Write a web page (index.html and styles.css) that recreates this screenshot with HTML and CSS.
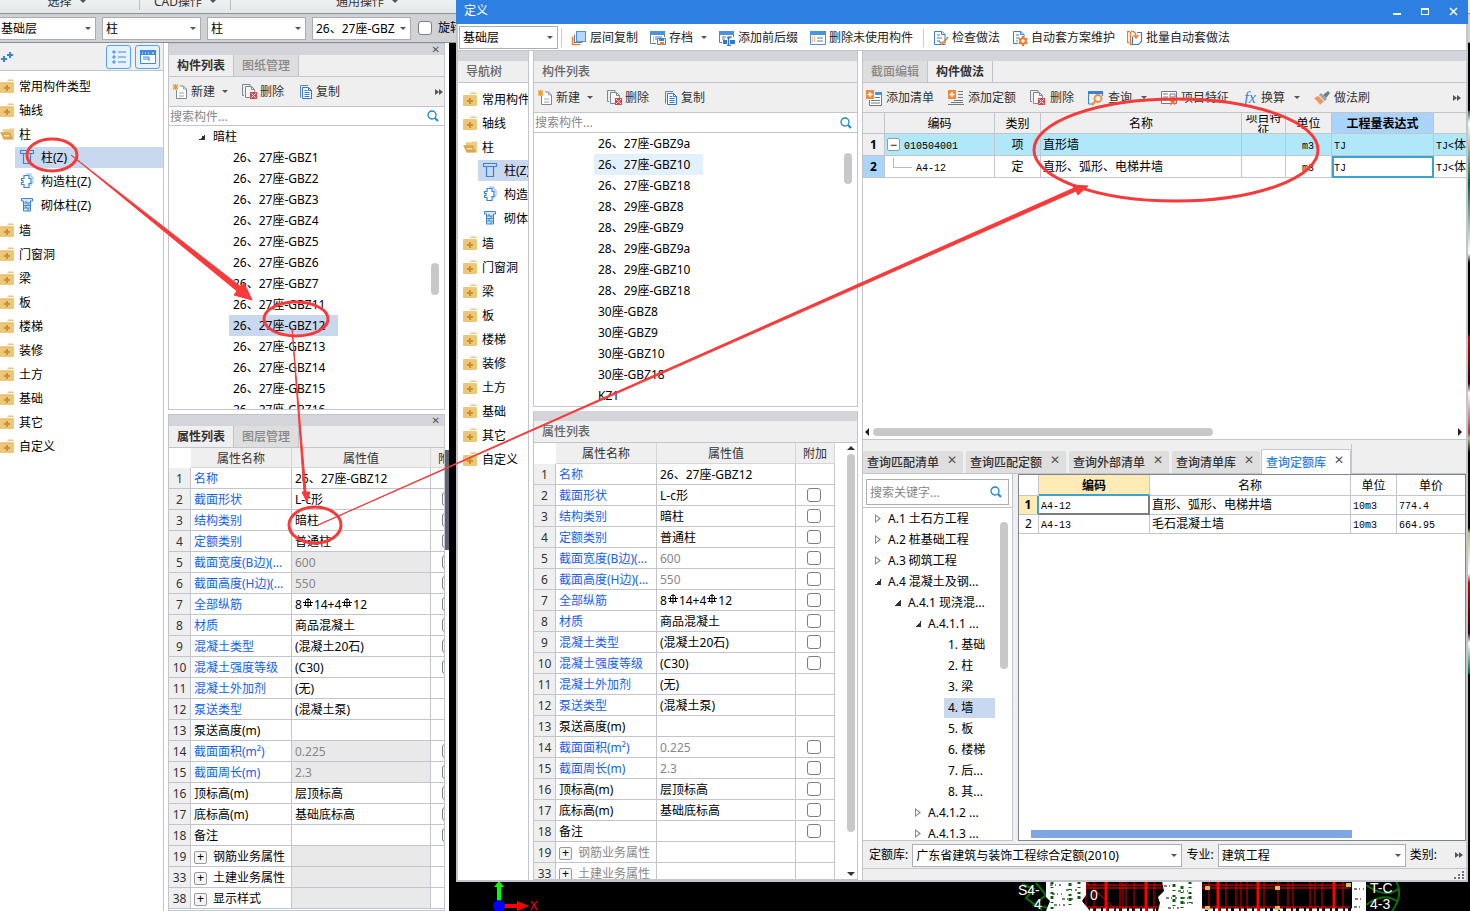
FILE: index.html
```html
<!DOCTYPE html>
<html lang="zh-CN">
<head>
<meta charset="utf-8">
<title>定义</title>
<link rel="stylesheet" href="styles.css">
</head>
<body>
<svg class="defs" aria-hidden="true">
  <symbol id="folder" viewBox="0 0 14 14"><path d="M7 2l1-1.500h5l1 1.500z" fill="#edc478"/><rect y="3" width="14" height="11" rx="1" fill="#eec679"/><path d="M7 6v6M4 9h6" stroke="#c6932f" stroke-width="2"/></symbol>
  <symbol id="open" viewBox="0 0 15 14"><path d="M3 4V2h6l1-1h5v12H4z" fill="#f0cb85"/><path d="M0 5h11l3 8H4z" fill="#d9a94c"/><path d="M4 9h6" stroke="#fff" stroke-width="1"/></symbol>
  <symbol id="col" viewBox="0 0 14 16"><path d="M.5 1.500h13v3h-3v10h-7v-10h-3zM4 4.500h6" fill="none" stroke="#3b82d4" stroke-width="1.200"/></symbol>
  <symbol id="gz" viewBox="0 0 14 16"><path d="M6 1h5v3h2v6h-2v3" fill="none" stroke="#8ab8ea"/><path d="M4 2.500h5v3h2v5H9v4H4v-3H1.500v-2H3v-2H1.500v-2H4z" fill="#fff" stroke="#3b82d4" stroke-width="1.200"/></symbol>
  <symbol id="qt" viewBox="0 0 14 16"><path d="M1.500 1.500h11v2.500h-2v10h-7V4h-2z" fill="#d7e8fb" stroke="#3b82d4"/><path d="M4 6h6M4 8.500h6M4 11h6M6 4v2M8 6v2.500M6 8.500V11M8 11v3" stroke="#3b82d4"/></symbol>
  <symbol id="new" viewBox="0 0 16 16"><path d="M3.500 6v8.500h10V5l-3-3H7" fill="#fff" stroke="#7e8894"/><path d="M10.500 2v3h3M6 9h5M6 12h5" fill="none" stroke="#9aa2ad"/><path d="M0 .500l5 5M5 .500l-5 5M2.500 0v6M0 3h5" stroke="#f29a2e" stroke-width="1.100"/></symbol>
  <symbol id="del" viewBox="0 0 16 16"><path d="M2 11.500H.500V.500H8V2" fill="none" stroke="#7e8894"/><path d="M8 13.500H3.500v-11h6l3 3V8M9.500 2.500v3h3" fill="#f6f7f8" stroke="#7e8894"/><rect x="8" y="8" width="7" height="7" fill="#d8454b"/><path d="M9 9l5 5M14 9l-5 5" stroke="#fff"/></symbol>
  <symbol id="copy" viewBox="0 0 16 16"><path d="M2.500 13.500v-12H10" fill="none" stroke="#5e83b0"/><path d="M4.500 3.500h6l3 3v8h-9z" fill="#fff" stroke="#2f7ad1"/><path d="M10.500 3.500v3h3M6.500 6.500h3M6.500 8.500h5M6.500 10.500h5M6.500 12.500h5" fill="none" stroke="#2f7ad1"/></symbol>
  <symbol id="search" viewBox="0 0 12 12"><circle cx="5" cy="5" r="4" fill="none" stroke="#1b87c4" stroke-width="1.300"/><path d="M8 8l3 3" stroke="#1b87c4" stroke-width="2"/></symbol>
  <symbol id="floors" viewBox="0 0 16 16"><path d="M1.500 6.500v8h8" fill="none" stroke="#e8853b" stroke-width="1.400"/><path d="M3.500 4.500v8h8" fill="none" stroke="#777f8b" stroke-width="1.200"/><rect x="5.500" y="1.500" width="9" height="10" fill="#b5d7fb" stroke="#4b93e2"/></symbol>
  <symbol id="archive" viewBox="0 0 16 16"><rect width="15" height="4" y="1" fill="#4b93e2"/><path d="M.500 4v9.500H6M14.500 5v2M3 7h1M5 7h7M3 9h1M5 9h2M3 11h1" fill="none" stroke="#707a87"/><path d="M7.500 8.500h8v6h-8z" fill="#fff" stroke="#3b82d4"/><path d="M9 9h5v2H9z" fill="#3b82d4"/><path d="M10 12h4v3h-4z" fill="#ec7f31"/></symbol>
  <symbol id="affix" viewBox="0 0 16 16"><rect width="15" height="4" y="1" fill="#4b93e2"/><path d="M.500 4v8.500H3M14.500 5v2M3 7h4M3 9h3M9 7h4" fill="none" stroke="#707a87"/><path d="M4 10h4v4H4zM11 10h5v4h-5z" fill="#2d78cf"/><path d="M8 7.500h4M9.500 7.500V16M8 15.500h4" stroke="#2d78cf" stroke-width="1.300"/></symbol>
  <symbol id="clean" viewBox="0 0 16 16"><path d="M.500 3.500h15v11H.500z" fill="#fff" stroke="#4b93e2"/><rect width="16" height="4" y="1" fill="#4b93e2"/><path d="M2 7h3M2 9h3M2 11h3" stroke="#ef8c3c" stroke-dasharray="1 1"/><path d="M7 8h6M7 11h6" stroke="#707a87"/></symbol>
  <symbol id="check" viewBox="0 0 16 16"><path d="M2 1.500h7l3 3v10H1.500v-13z" fill="#fff" stroke="#3b82d4"/><path d="M8.500 1.500v3h4M4 5h3M4 8h5M4 11h3" fill="none" stroke="#3b82d4"/><path d="M6 11l3 3 6-7" fill="none" stroke="#ec7b2c" stroke-width="1.600"/></symbol>
  <symbol id="gear" viewBox="0 0 16 16"><path d="M6 13.500H1.500v-12H9l3 3V7" fill="#fff" stroke="#3b82d4"/><path d="M8.500 1.500v3h3M4 5h3M4 8h3M4 11h2" fill="none" stroke="#3b82d4"/><circle cx="11" cy="11" r="2.800" fill="#fff" stroke="#ec7b2c" stroke-width="2"/><path d="M11 6v2M11 14v2M6.700 8.500l1.700 1M13.600 12.500l1.700 1M6.700 13.500l1.700-1M13.600 9.500l1.700-1" stroke="#ec7b2c" stroke-width="2"/></symbol>
  <symbol id="batch" viewBox="0 0 16 16"><path d="M2 12.500H.500v-11H3M5 14.500H3.500V2" fill="none" stroke="#ec7b2c" stroke-width="1.300"/><path d="M10 2.500h4.500v9l-3 3h-6v-8" fill="#fff" stroke="#3b82d4" stroke-width="1.200"/><path d="M4 1.500q5-.500 5 5M6.500 5L9 8l2.500-3" fill="none" stroke="#ec7b2c" stroke-width="1.300"/></symbol>
  <symbol id="addlist" viewBox="0 0 16 16"><path d="M9 2.500h6.500v13H3.500V10" fill="#fff" stroke="#707a87"/><path d="M9 2h7v3H9z" fill="#4b93e2"/><path d="M9 7.500h5M5 10.500h9M5 13h9" stroke="#707a87"/><path d="M0 0h8v9H0z" fill="#ed8a3d"/><path d="M4 2v5M1.500 4.500h5" stroke="#fff" stroke-width="1.300"/></symbol>
  <symbol id="addquota" viewBox="0 0 16 16"><path d="M10 1.500h5M10 4.500h5M10 7.500h5M6 10.500h9M0 14.500h16M3 12.500h12" stroke="#707a87"/><path d="M0 0h8v9H0z" fill="#ed8a3d"/><path d="M4 2v5M1.500 4.500h5" stroke="#fff" stroke-width="1.300"/></symbol>
  <symbol id="query" viewBox="0 0 16 16"><path d="M.500 2v12H4M14.500 3v3" fill="none" stroke="#3b82d4"/><rect width="15" height="3" y="1" fill="#3b82d4"/><circle cx="10" cy="8.500" r="3.500" fill="none" stroke="#ec8a3d" stroke-width="1.800"/><path d="M7.500 11L4 15" stroke="#ec8a3d" stroke-width="2"/></symbol>
  <symbol id="feature" viewBox="0 0 16 16"><path d="M.500 1.500h15v12H.500zM2 4h5M2 7h5M2 10h5M9 4h5v3H9z" fill="#fff" stroke="#707a87"/><path d="M12 7l1 3h3l-2.500 2 1 3.500-2.500-2-3 2 1-3.500L7 10h4z" fill="#ec7b2c"/></symbol>
  <symbol id="brush" viewBox="0 0 16 16"><path d="M14 1l2 2-4 5-3-3z" fill="#707a87"/><path d="M7 3l6 6-2 2-6-6z" fill="#9aa2ac"/><path d="M4 6l6 5-4 4-2-3-4-4z" fill="#f4955f"/></symbol>
  <symbol id="rebar" viewBox="0 0 10 10"><path d="M5 0v10M2.500 2.500v5M7.500 2.500v5M1 7.500h8" stroke="#000"/><path d="M3 1.500h4M0 4.500h10" fill="none" stroke="#000"/></symbol>
  <symbol id="more" viewBox="0 0 8 6"><path d="M0 0l4 3-4 3zM4 0l4 3-4 3z" fill="#555"/></symbol>
</svg>

<div class="desktop">
  <div class="ribbon"><span class="rib rib-a">选择<i class="car"></i></span><span class="rib rib-b">CAD操作<i class="car"></i></span><span class="rib rib-c">通用操作<i class="car"></i></span></div>
  <div class="selbar">
    <span class="combo flush"><select aria-label="楼层"><option>基础层</option></select></span>
    <span class="combo"><select aria-label="构件大类"><option>柱</option></select></span>
    <span class="combo"><select aria-label="构件类型"><option>柱</option></select></span>
    <span class="combo"><select aria-label="构件"><option>26、27座-GBZ</option></select></span>
    <label class="rotate"><input type="checkbox">旋转</label>
  </div>

  <div class="work">
    <nav class="side">
      <div class="side-head">
        <svg width="13" height="12" viewBox="0 0 13 12"><path d="M4 5v6M1 8h6M10 1v6M7 4h6" stroke="#3b82d4" stroke-width="2"/></svg>
        <button class="view" aria-label="列表视图"><svg width="14" height="14" viewBox="0 0 14 14"><path d="M1 1h2v2H1zM1 6h2v2H1zM1 11h2v2H1zM6 2h8M6 7h8M6 12h8" fill="none" stroke="#3b8ae8"/></svg></button>
        <button class="view" aria-label="图标视图"><svg width="16" height="14" viewBox="0 0 16 14"><path d="M.500.500h15v13H.500zM3 7h6v4M3 9h6" fill="#fff" stroke="#3b8ae8"/><path d="M0 0h16v5H0z" fill="#3b8ae8"/><path d="M2 3h1M5 3h1M8 3h1M12 3h2" stroke="#fff"/></svg></button>
      </div>
      <ul class="tree">
        <li><svg><use href="#folder"/></svg>常用构件类型</li>
        <li><svg><use href="#folder"/></svg>轴线</li>
        <li><svg><use href="#open"/></svg>柱</li>
        <li class="sub on"><svg><use href="#col"/></svg>柱(Z)</li>
        <li class="sub"><svg><use href="#gz"/></svg>构造柱(Z)</li>
        <li class="sub"><svg><use href="#qt"/></svg>砌体柱(Z)</li>
        <li><svg><use href="#folder"/></svg>墙</li>
        <li><svg><use href="#folder"/></svg>门窗洞</li>
        <li><svg><use href="#folder"/></svg>梁</li>
        <li><svg><use href="#folder"/></svg>板</li>
        <li><svg><use href="#folder"/></svg>楼梯</li>
        <li><svg><use href="#folder"/></svg>装修</li>
        <li><svg><use href="#folder"/></svg>土方</li>
        <li><svg><use href="#folder"/></svg>基础</li>
        <li><svg><use href="#folder"/></svg>其它</li>
        <li><svg><use href="#folder"/></svg>自定义</li>
      </ul>
    </nav>

    <div class="docks">
      <section class="dock">
        <div class="strip"><button class="x" aria-label="关闭">✕</button></div>
        <div class="tabs"><button class="tab on">构件列表</button><button class="tab off">图纸管理</button></div>
        <div class="tools list-tools">
          <button><svg><use href="#new"/></svg>新建<i class="car"></i></button>
          <button><svg><use href="#del"/></svg>删除</button>
          <button><svg><use href="#copy"/></svg>复制</button>
          <svg class="more"><use href="#more"/></svg>
        </div>
        <div class="search"><input type="text" placeholder="搜索构件..." aria-label="搜索构件"><svg><use href="#search"/></svg></div>
        <div class="list">
          <ul>
            <li class="group"><i class="tri"></i>暗柱</li>
            <li><span>26、27座-GBZ1</span></li><li><span>26、27座-GBZ2</span></li><li><span>26、27座-GBZ3</span></li>
            <li><span>26、27座-GBZ4</span></li><li><span>26、27座-GBZ5</span></li><li><span>26、27座-GBZ6</span></li>
            <li><span>26、27座-GBZ7</span></li><li><span>26、27座-GBZ11</span></li><li><span class="on">26、27座-GBZ12</span></li>
            <li><span>26、27座-GBZ13</span></li><li><span>26、27座-GBZ14</span></li><li><span>26、27座-GBZ15</span></li>
            <li><span>26、27座-GBZ16</span></li>
          </ul>
          <div class="thumb thumb-a"></div>
        </div>
      </section>
      <section class="dock">
        <div class="strip"><button class="x" aria-label="关闭">✕</button></div>
        <div class="tabs"><button class="tab on">属性列表</button><button class="tab off">图层管理</button></div>
        <div class="clip">
        <table class="props main-props">
          <thead><tr><th class="n"></th><th class="k">属性名称</th><th class="v">属性值</th><th class="c">附加</th></tr></thead>
          <tbody>
            <tr><td>1</td><td class="b">名称</td><td>26、27座-GBZ12</td><td></td></tr>
            <tr><td>2</td><td class="b">截面形状</td><td>L-c形</td><td><input type="checkbox" aria-label="附加 截面形状"></td></tr>
            <tr><td>3</td><td class="b">结构类别</td><td>暗柱</td><td><input type="checkbox" aria-label="附加 结构类别"></td></tr>
            <tr><td>4</td><td class="b">定额类别</td><td>普通柱</td><td><input type="checkbox" aria-label="附加 定额类别"></td></tr>
            <tr><td>5</td><td class="b">截面宽度(B边)(...</td><td class="g">600</td><td><input type="checkbox" aria-label="附加 截面宽度"></td></tr>
            <tr><td>6</td><td class="b">截面高度(H边)(...</td><td class="g">550</td><td><input type="checkbox" aria-label="附加 截面高度"></td></tr>
            <tr><td>7</td><td class="b">全部纵筋</td><td>8<svg class="rebar"><use href="#rebar"/></svg>14+4<svg class="rebar"><use href="#rebar"/></svg>12</td><td><input type="checkbox" aria-label="附加 全部纵筋"></td></tr>
            <tr><td>8</td><td class="b">材质</td><td>商品混凝土</td><td><input type="checkbox" aria-label="附加 材质"></td></tr>
            <tr><td>9</td><td class="b">混凝土类型</td><td>(混凝土20石)</td><td><input type="checkbox" aria-label="附加 混凝土类型"></td></tr>
            <tr><td>10</td><td class="b">混凝土强度等级</td><td>(C30)</td><td><input type="checkbox" aria-label="附加 混凝土强度等级"></td></tr>
            <tr><td>11</td><td class="b">混凝土外加剂</td><td>(无)</td><td></td></tr>
            <tr><td>12</td><td class="b">泵送类型</td><td>(混凝土泵)</td><td></td></tr>
            <tr><td>13</td><td>泵送高度(m)</td><td></td><td></td></tr>
            <tr><td>14</td><td class="b">截面面积(m²)</td><td class="g">0.225</td><td><input type="checkbox" aria-label="附加 截面面积"></td></tr>
            <tr><td>15</td><td class="b">截面周长(m)</td><td class="g">2.3</td><td><input type="checkbox" aria-label="附加 截面周长"></td></tr>
            <tr><td>16</td><td>顶标高(m)</td><td>层顶标高</td><td><input type="checkbox" aria-label="附加 顶标高"></td></tr>
            <tr><td>17</td><td>底标高(m)</td><td>基础底标高</td><td><input type="checkbox" aria-label="附加 底标高"></td></tr>
            <tr><td>18</td><td>备注</td><td></td><td><input type="checkbox" aria-label="附加 备注"></td></tr>
            <tr><td>19</td><td><button class="pm" aria-label="展开">+</button>钢筋业务属性</td><td class="g"></td><td></td></tr>
            <tr><td>33</td><td><button class="pm" aria-label="展开">+</button>土建业务属性</td><td class="g"></td><td></td></tr>
            <tr><td>38</td><td><button class="pm" aria-label="展开">+</button>显示样式</td><td class="g"></td><td></td></tr>
          </tbody>
        </table>
        </div>
      </section>
    </div>
    <div class="gutter"><button class="collapse" aria-label="收起"></button></div>
    <div class="canvas"></div>
  </div>

  <svg class="axis" width="60" height="30" viewBox="0 0 60 30"><path d="M15 2v22" stroke="#0f0" stroke-width="4"/><path d="M15 0l5 6H10z" fill="#0f0"/><path d="M15 25h20" stroke="#f00" stroke-width="4"/><path d="M33 20l12 5-12 5z" fill="#f00"/><circle cx="15" cy="25" r="6" fill="#00f"/><text x="46" y="29" fill="#f00" font-size="13">X</text></svg>
  <svg class="plan" width="400" height="30" viewBox="0 0 400 30">
    <g fill="none">
      <path d="M66 4H340M66 7H340M66 26H340" stroke="#f00"/>
      <path d="M96 0v30M136 0v30M208 0v30M248 0v30M324 0v30" stroke="#f00" stroke-width="3"/>
      <path d="M76 0v30M84 0v30M110 0v30M113 0v30M116 0v30M124 0v30M144 0v30M199 0v30M216 0v30M226 0v30M231 0v30M237 0v30M254 0v30M268 0v30M278 0v30M283 0v30M300 0v30M305 0v30M312 0v30M333 0v30M75 0l32 30" stroke="#d00"/>
      <path d="M12 3l12 5-8 9 16 12M26 2l10 12-12 10 20 4M356 4q20 14 32 4M356 24q18-14 32-3M386 0q8 14-4 30" stroke="#0a700a" stroke-width="2"/>
    </g>
    <path d="M36 0h40v14l-4 6 8 10H36l4-10-4-4zM152 0h40v30h-44l2-8-2-6 6-6zM342 0h14v30h-14z" fill="#fff"/>
    <path d="M40 4h12M56 9h14M42 13h10M52 18h16M44 24h14M154 5h12M168 10h10M156 17h22M172 22h12M158 27h16M344 8h10M345 18h9M344 26h8" stroke="#000" stroke-dasharray="3 2 1 3 2 5"/>
    <path d="M42 0v28M60 2v24M69 0v20M164 3v24M172 5v22M180 0v26" stroke="#0a600a" stroke-width="3" stroke-dasharray="3 3 1 4 2 2"/>
    <path d="M80 29h66M192 29h150" stroke="#fff" stroke-width="3" stroke-dasharray="3 3 5 2"/>
    <path d="M195 5h5v4h-5zM265 5h5v4h-5zM336 2h5v4h-5zM195 25h5v4h-5zM265 25h5v4h-5z" fill="#cfc060"/>
    <g fill="#fff" font-size="14"><text x="8" y="14">S4-</text><text x="24" y="28">4</text><text x="80" y="19">0</text><text x="360" y="12">T-C</text><text x="360" y="28">4-3</text></g>
  </svg>
  <div class="edge"></div>

  <main class="dialog">
    <header class="title"><h1>定义</h1><div class="wc"><button aria-label="最小化"><i class="min"></i></button><button aria-label="最大化"><i class="max"></i></button><button aria-label="关闭"><svg width="9" height="9" viewBox="0 0 9 9"><path d="M1 1l7 7M8 1L1 8" stroke="#fff" stroke-width="1.500"/></svg></button></div></header>
    <div class="frame">
    <div class="bar">
      <span class="combo"><select aria-label="楼层"><option>基础层</option></select></span><i class="sep"></i>
      <button><svg><use href="#floors"/></svg>层间复制</button>
      <button><svg><use href="#archive"/></svg>存档<i class="car"></i></button>
      <button><svg><use href="#affix"/></svg>添加前后缀</button>
      <button><svg><use href="#clean"/></svg>删除未使用构件</button><i class="sep"></i>
      <button><svg><use href="#check"/></svg>检查做法</button>
      <button><svg><use href="#gear"/></svg>自动套方案维护</button>
      <button><svg><use href="#batch"/></svg>批量自动套做法</button>
    </div>
    <div class="cols">
      <nav class="col nav2">
        <div class="strip"></div><h2>导航树</h2>
        <ul class="tree">
          <li><svg><use href="#folder"/></svg>常用构件类型</li>
          <li><svg><use href="#folder"/></svg>轴线</li>
          <li><svg><use href="#open"/></svg>柱</li>
          <li class="sub on"><svg><use href="#col"/></svg>柱(Z)</li>
          <li class="sub"><svg><use href="#gz"/></svg>构造柱(Z)</li>
          <li class="sub"><svg><use href="#qt"/></svg>砌体柱(Z)</li>
          <li><svg><use href="#folder"/></svg>墙</li>
          <li><svg><use href="#folder"/></svg>门窗洞</li>
          <li><svg><use href="#folder"/></svg>梁</li>
          <li><svg><use href="#folder"/></svg>板</li>
          <li><svg><use href="#folder"/></svg>楼梯</li>
          <li><svg><use href="#folder"/></svg>装修</li>
          <li><svg><use href="#folder"/></svg>土方</li>
          <li><svg><use href="#folder"/></svg>基础</li>
          <li><svg><use href="#folder"/></svg>其它</li>
          <li><svg><use href="#folder"/></svg>自定义</li>
        </ul>
      </nav>

      <div class="mid">
        <section class="col">
          <div class="strip"></div><h2>构件列表</h2>
          <div class="tools list-tools">
            <button><svg><use href="#new"/></svg>新建<i class="car"></i></button>
            <button><svg><use href="#del"/></svg>删除</button>
            <button><svg><use href="#copy"/></svg>复制</button>
          </div>
          <div class="search"><input type="text" placeholder="搜索构件..." aria-label="搜索构件"><svg><use href="#search"/></svg></div>
          <div class="list">
            <ul>
              <li><span>26、27座-GBZ9a</span></li><li><span class="hover">26、27座-GBZ10</span></li><li><span>26、27座-GBZ18</span></li>
              <li><span>28、29座-GBZ8</span></li><li><span>28、29座-GBZ9</span></li><li><span>28、29座-GBZ9a</span></li>
              <li><span>28、29座-GBZ10</span></li><li><span>28、29座-GBZ18</span></li><li><span>30座-GBZ8</span></li>
              <li><span>30座-GBZ9</span></li><li><span>30座-GBZ10</span></li><li><span>30座-GBZ18</span></li><li><span>KZ1</span></li>
            </ul>
            <div class="thumb thumb-b"></div>
          </div>
        </section>
        <section class="col">
          <div class="strip"></div><h2>属性列表</h2>
          <div class="clip">
          <table class="props">
            <thead><tr><th class="n"></th><th class="k">属性名称</th><th class="v">属性值</th><th class="c">附加</th></tr></thead>
            <tbody>
              <tr><td>1</td><td class="b">名称</td><td>26、27座-GBZ12</td><td></td></tr>
              <tr><td>2</td><td class="b">截面形状</td><td>L-c形</td><td><input type="checkbox" aria-label="附加 截面形状"></td></tr>
              <tr><td>3</td><td class="b">结构类别</td><td>暗柱</td><td><input type="checkbox" aria-label="附加 结构类别"></td></tr>
              <tr><td>4</td><td class="b">定额类别</td><td>普通柱</td><td><input type="checkbox" aria-label="附加 定额类别"></td></tr>
              <tr><td>5</td><td class="b">截面宽度(B边)(...</td><td class="w">600</td><td><input type="checkbox" aria-label="附加 截面宽度"></td></tr>
              <tr><td>6</td><td class="b">截面高度(H边)(...</td><td class="w">550</td><td><input type="checkbox" aria-label="附加 截面高度"></td></tr>
              <tr><td>7</td><td class="b">全部纵筋</td><td>8<svg class="rebar"><use href="#rebar"/></svg>14+4<svg class="rebar"><use href="#rebar"/></svg>12</td><td><input type="checkbox" aria-label="附加 全部纵筋"></td></tr>
              <tr><td>8</td><td class="b">材质</td><td>商品混凝土</td><td><input type="checkbox" aria-label="附加 材质"></td></tr>
              <tr><td>9</td><td class="b">混凝土类型</td><td>(混凝土20石)</td><td><input type="checkbox" aria-label="附加 混凝土类型"></td></tr>
              <tr><td>10</td><td class="b">混凝土强度等级</td><td>(C30)</td><td><input type="checkbox" aria-label="附加 混凝土强度等级"></td></tr>
              <tr><td>11</td><td class="b">混凝土外加剂</td><td>(无)</td><td></td></tr>
              <tr><td>12</td><td class="b">泵送类型</td><td>(混凝土泵)</td><td></td></tr>
              <tr><td>13</td><td>泵送高度(m)</td><td></td><td></td></tr>
              <tr><td>14</td><td class="b">截面面积(m²)</td><td class="w">0.225</td><td><input type="checkbox" aria-label="附加 截面面积"></td></tr>
              <tr><td>15</td><td class="b">截面周长(m)</td><td class="w">2.3</td><td><input type="checkbox" aria-label="附加 截面周长"></td></tr>
              <tr><td>16</td><td>顶标高(m)</td><td>层顶标高</td><td><input type="checkbox" aria-label="附加 顶标高"></td></tr>
              <tr><td>17</td><td>底标高(m)</td><td>基础底标高</td><td><input type="checkbox" aria-label="附加 底标高"></td></tr>
              <tr><td>18</td><td>备注</td><td></td><td><input type="checkbox" aria-label="附加 备注"></td></tr>
              <tr><td>19</td><td class="w"><button class="pm" aria-label="展开">+</button>钢筋业务属性</td><td></td><td></td></tr>
              <tr><td>33</td><td class="w"><button class="pm" aria-label="展开">+</button>土建业务属性</td><td></td><td></td></tr>
            </tbody>
          </table>
          <div class="vbar"><i class="up"></i><i class="vthumb"></i><i class="down"></i></div>
          </div>
        </section>
      </div>

      <div class="right">
        <section class="col methods">
          <div class="strip"></div>
          <div class="tabs"><button class="tab off">截面编辑</button><button class="tab on">构件做法</button></div>
          <div class="tools">
            <button><svg><use href="#addlist"/></svg>添加清单</button>
            <button><svg><use href="#addquota"/></svg>添加定额</button>
            <button><svg><use href="#del"/></svg>删除</button>
            <button><svg><use href="#query"/></svg>查询<i class="car"></i></button>
            <button><svg><use href="#feature"/></svg>项目特征</button>
            <button><em>fx</em>换算<i class="car"></i></button>
            <button><svg><use href="#brush"/></svg>做法刷</button>
            <svg class="more"><use href="#more"/></svg>
          </div>
          <div class="sheet">
          <table class="grid">
            <colgroup><col class="w22"><col class="w110"><col class="w46"><col class="w201"><col class="w44"><col class="w46"><col class="w102"><col></colgroup>
            <thead><tr><th></th><th>编码</th><th>类别</th><th>名称</th><th><div class="wrap">项目特征</div></th><th>单位</th><th class="act">工程量表达式</th><th></th></tr></thead>
            <tbody>
              <tr class="cyan"><td class="rn">1</td><td class="root"><button class="pm" aria-label="收起">−</button><code>010504001</code></td><td class="mid-t">项</td><td>直形墙</td><td></td><td class="end"><code>m3</code></td><td><code>TJ</code></td><td><code>TJ&lt;</code>体积&gt;</td></tr>
              <tr><td class="rn act">2</td><td class="leaf"><code>A4-12</code></td><td class="mid-t">定</td><td>直形、弧形、电梯井墙</td><td></td><td class="end"><code>m3</code></td><td class="focus"><code>TJ</code></td><td><code>TJ&lt;</code>体积&gt;</td></tr>
            </tbody>
          </table>
          </div>
          <div class="hbar"><i class="lt"></i><i class="hthumb"></i><i class="rt"></i></div>
        </section>

        <section class="query">
          <div class="qtabs">
            <button class="qtab">查询匹配清单<b>✕</b></button><button class="qtab">查询匹配定额<b>✕</b></button><button class="qtab">查询外部清单<b>✕</b></button><button class="qtab">查询清单库<b>✕</b></button><button class="qtab on">查询定额库<b>✕</b></button><i class="vline"></i>
          </div>
          <div class="qbody">
            <div class="qtree">
              <div class="qsearch"><input type="text" placeholder="搜索关键字..." aria-label="搜索关键字"><svg><use href="#search"/></svg></div>
              <div class="qlist">
              <ul>
                <li><i class="tc"></i>A.1 土石方工程</li><li><i class="tc"></i>A.2 桩基础工程</li><li><i class="tc"></i>A.3 砌筑工程</li>
                <li><i class="tri"></i>A.4 混凝土及钢...</li><li class="l1"><i class="tri"></i>A.4.1 现浇混...</li><li class="l2"><i class="tri"></i>A.4.1.1 ...</li>
                <li class="l3"><span>1. 基础</span></li><li class="l3"><span>2. 柱</span></li><li class="l3"><span>3. 梁</span></li><li class="l3"><span class="on">4. 墙</span></li>
                <li class="l3"><span>5. 板</span></li><li class="l3"><span>6. 楼梯</span></li><li class="l3"><span>7. 后...</span></li><li class="l3"><span>8. 其...</span></li>
                <li class="l2"><i class="tc"></i>A.4.1.2 ...</li><li class="l2"><i class="tc"></i>A.4.1.3 ...</li>
              </ul>
              <div class="thumb thumb-c"></div>
              </div>
            </div>
            <div class="qgrid">
              <table class="grid quota">
                <colgroup><col class="w20"><col class="w111"><col class="w201"><col class="w46"><col></colgroup>
                <thead><tr><th></th><th class="yel">编码</th><th>名称</th><th>单位</th><th>单价</th></tr></thead>
                <tbody>
                  <tr><td class="rn yel">1</td><td class="cur"><code>A4-12</code></td><td>直形、弧形、电梯井墙</td><td><code>10m3</code></td><td><code>774.4</code></td></tr>
                  <tr><td class="rn2">2</td><td><code>A4-13</code></td><td>毛石混凝土墙</td><td><code>10m3</code></td><td><code>664.95</code></td></tr>
                </tbody>
              </table>
              <div class="bluebar"></div>
            </div>
          </div>
          <div class="qfoot">
            <label for="lib">定额库:</label><span class="combo wide"><select id="lib"><option>广东省建筑与装饰工程综合定额(2010)</option></select></span>
            <label for="major">专业:</label><span class="combo mid-w"><select id="major"><option>建筑工程</option></select></span>
            <span>类别:</span><svg class="more"><use href="#more"/></svg>
          </div>
          <div class="status"><svg width="10" height="8" viewBox="0 0 10 8"><path d="M8 1h2M4 4h2M8 4h2M0 7h2M4 7h2M8 7h2" stroke="#6b7480" stroke-width="2"/></svg></div>
        </section>
      </div>
    </div>
    </div>
  </main>

  <svg class="marks" width="1470" height="911" viewBox="0 0 1470 911">
    <g fill="none" stroke="#f93a3a"><ellipse cx="52" cy="155" rx="25" ry="16" stroke-width="3"/><ellipse cx="296" cy="319" rx="32" ry="17" stroke-width="3"/><ellipse cx="315" cy="525" rx="26" ry="18" stroke-width="3"/><ellipse cx="1176" cy="150" rx="142" ry="51" stroke-width="3"/></g>
    <g fill="#f93a3a" stroke="#f93a3a" stroke-linejoin="round"><path d="M71 155L241 287l3-4 8 17-18-5 3-4z"/><path d="M292 328l14 164 4 0-3 10-5-10 2 0z"/><path d="M318 525L1074 188l-2-3 16 1-10 9-2-4z"/></g>
  </svg>
</div>
</body>
</html>
```
FILE: styles.css
```css
* { box-sizing: border-box; }
body { margin: 0; font: 12px/20px "Noto Sans", "Noto Sans CJK SC", sans-serif; color: #000; background: #000; }
ul { list-style: none; margin: 0; padding: 0; }
button, select, input { font: inherit; color: inherit; margin: 0; }
button { background: none; border: 0; padding: 0; white-space: nowrap; }
input[type=checkbox] { appearance: none; flex: none; width: 14px; height: 14px; border: 1px solid #7c7f85; border-radius: 3px; background: #fff; }
h1, h2 { margin: 0; font-size: 12px; font-weight: 400; }
.defs { display: none; }
.desktop { position: relative; display: flex; flex-direction: column; height: 100vh; overflow: hidden; }

.ribbon { position: relative; display: flex; height: 14px; flex: none; overflow: hidden; background: linear-gradient(#eef1f1, #e4e8e9); border-bottom: 1px solid #8c8f96; color: #333; line-height: 4px; }
.rib { display: flex; align-items: flex-start; justify-content: center; height: 10px; white-space: nowrap; }
.rib-a { width: 140px; padding-right: 6px; border-right: 1px solid #b8bbc0; }
.rib-b { width: 91px; border-right: 1px solid #b8bbc0; }
.rib-c { width: 272px; }
.rib .car { margin-left: 8px; }
.car { flex: none; width: 0; height: 0; border: 3px solid transparent; border-top-color: #555; border-bottom: 0; }
.selbar { display: flex; align-items: center; gap: 6px; height: 29px; flex: none; background: #d0d2d6; border-bottom: 1px solid #8c8f96; }
.combo { position: relative; flex: none; width: 99px; height: 23px; background: #fff; border: 1px solid #abadb3; }
.combo.flush { width: 96px; border-left: 0; }
.combo.flush select { padding-left: 1px; }
.combo select { appearance: none; width: 100%; height: 100%; border: 0; background: none; padding: 1px 12px 0 3px; }
.combo::after { content: ""; position: absolute; right: 4px; top: 9px; border: 3px solid transparent; border-top-color: #555; border-bottom: 0; }
.rotate { display: flex; align-items: center; gap: 6px; padding-left: 1px; }

.work { flex: 1; min-height: 0; display: flex; }
.side { width: 164px; flex: none; background: #fff; border-right: 1px solid #c3c5cd; }
.side-head { display: flex; align-items: center; gap: 4px; height: 28px; padding-right: 3px; background: #efefef; border-bottom: 1px solid #c3c5cd; }
.side-head > svg { margin-right: auto; }
.view { width: 25px; height: 24px; border: 1px solid #58a0ee; border-radius: 3px; background: #e6f2ff; display: grid; place-items: center; }
.tree { display: flex; flex-direction: column; padding-top: 3px; }
.tree li { display: flex; align-items: center; gap: 5px; flex: none; height: 24px; padding-top: 1px; white-space: nowrap; }
.tree svg { width: 14px; height: 14px; flex: none; margin-bottom: 2px; }
.tree .sub { height: 21px; margin: 1px 0 2px 15px; padding-left: 5px; gap: 7px; }
.tree .sub svg { height: 16px; }
.tree .on { background: #c8d8ef; }

.docks { width: 281px; flex: none; padding-left: 4px; background: #fff; display: grid; grid-template-rows: minmax(0, 367fr) minmax(0, 497fr); gap: 4px; }
.dock { display: flex; flex-direction: column; min-height: 0; border: 1px solid #c3c5cd; overflow: hidden; }
.strip { display: flex; justify-content: flex-end; flex: none; height: 11px; background: #d4d5da; }
.x { font: 10px/12px "DejaVu Sans", sans-serif; color: #555; padding-right: 4px; }
.tabs { display: flex; flex: none; height: 22px; background: #efefef; border-bottom: 1px solid #c3c5cd; }
.tab { padding: 0 8px; border-right: 1px solid #c3c5cd; color: #333; }
.tab.on { font-weight: 700; }
.tab.off { background: #dedede; color: #888; font-weight: 500; }
.tools { display: flex; align-items: center; gap: 14px; flex: none; height: 30px; padding: 0 5px 0 3px; background: #efefef; border-bottom: 1px solid #c3c5cd; color: #333; }
.tools button, .bar button { display: flex; align-items: center; gap: 4px; }
.tools button svg { width: 16px; height: 16px; }
.tools .car, .bar .car { margin: 0 0 0 5px; }
.tools em { width: 14px; font: italic 16px/16px "Liberation Serif", serif; color: #3b82d4; }
.list-tools { padding-left: 4px; }
.list-tools button { gap: 2px; }
svg.more { width: 8px; height: 6px; margin-left: auto; flex: none; }
.list-tools svg.more { margin-right: -4px; }
.search { display: flex; align-items: center; flex: none; height: 19px; padding: 0 5px 0 1px; border-bottom: 1px solid #c3c5cd; background: #fff; }
.search input, .qsearch input { flex: 1; min-width: 0; height: 18px; border: 0; padding: 1px 0 0; background: none; }
input::placeholder { color: #888; opacity: 1; }
.search svg, .qsearch svg { width: 12px; height: 12px; flex: none; }
.list { position: relative; flex: 1; min-height: 0; overflow: hidden; background: #fff; }
.list li { height: 21px; line-height: 21px; padding-left: 60px; white-space: nowrap; }
.list li span { display: inline-block; min-width: 90px; padding: 0 13px 0 4px; }
.list li.group { display: flex; align-items: center; padding-left: 30px; gap: 8px; }
.list .on { background: #c8d8ef; }
.list .hover { background: #e3f1ff; }
.tri { flex: none; width: 6px; height: 6px; background: linear-gradient(135deg, transparent 50%, #333 50%); }
.thumb { position: absolute; right: 5px; width: 8px; border-radius: 4px; background: #c8c8c8; }
.thumb-a { top: 137px; height: 32px; }
.thumb-b { top: 20px; height: 31px; }
.thumb-c { top: 14px; height: 147px; right: 4px; }

.clip { position: relative; flex: 1; min-height: 0; overflow: hidden; background: #fff; }
table { border-collapse: separate; border-spacing: 0; table-layout: fixed; }
.props { width: 301px; }
.props th, .props td { height: 21px; padding: 2px 0 0 3px; line-height: 18px; border: solid #c3c5cd; border-width: 0 1px 1px 0; white-space: nowrap; overflow: hidden; text-align: left; }
.props th { background: #efefef; color: #333; font-weight: 400; text-align: center; border-color: #d5d6da; padding-left: 0; }
.main-props th { height: 20px; line-height: 17px; }
.props .n { width: 22px; background: #fff; border-color: #fff; }
.props .k { width: 101px; }
.props .v { width: 139px; }
.props .c { width: 39px; }
.props td:first-child { background: #efefef; text-align: center; padding-left: 0; color: #333; }
.props td:last-child { padding: 0; text-align: center; }
.props td input { display: block; margin: 0 11px; }
.props .b { color: #1560f0; }
.props .g { background: #e9e9e9; color: #888; }
.props .w { color: #888; }
.rebar { width: 10px; height: 10px; margin: 0 1px; vertical-align: 1px; }
.pm { width: 13px; height: 13px; margin: 0 6px 0 0; border: 1px solid #999; border-radius: 2px; background: #f5f5f5; font: 12px/10px "Liberation Sans", sans-serif; color: #000; }
.gutter { width: 4px; flex: none; background: #fff; padding-top: 407px; }
.collapse { display: block; width: 4px; height: 100px; background: #5d6673; }
.canvas { flex: 1; background: #000; }
.axis { position: absolute; left: 484px; bottom: 0; }
.plan { position: absolute; right: 60px; bottom: 0; font-family: "Liberation Sans", sans-serif; }
.edge { position: absolute; right: 0; top: 43px; width: 2px; bottom: 0; background: linear-gradient(#000 68px, #2b6b2b 68px, #fff 80px, #063 140px, #fff 210px, #000 220px, #000 290px, #c00 295px, #300 340px, #fff 350px, #a33 390px, #b9c46a 395px, #000 410px, #000 485px, #b9c46a 490px, #fff 530px, #c00 540px, #300 590px, #fff 600px, #063 630px, #000 632px); }

.dialog { position: absolute; left: 456px; top: 0; right: 2px; bottom: 29px; display: flex; flex-direction: column; background: #fff; }
.title { display: flex; justify-content: space-between; align-items: center; flex: none; height: 24px; padding: 0 10px 2px 8px; background: #2d7fe2; color: #fff; }
.wc { display: flex; gap: 18px; }
.wc button { width: 10px; height: 14px; display: grid; place-items: center; }
.min { width: 8px; height: 2px; margin-top: 6px; background: #fff; }
.max { width: 8px; height: 7px; border: 1px solid #fff; border-top-width: 2px; }
.frame { flex: 1; min-height: 0; display: flex; flex-direction: column; border: solid #c3c5cd; border-width: 0 2px 2px 2px; }
.bar { display: flex; align-items: center; gap: 12px; height: 27px; flex: none; padding: 1px 0 0 1px; border-bottom: 1px solid #c3c5cd; color: #222; }
.bar button { gap: 3px; }
.bar button svg { width: 16px; height: 16px; }
.bar .combo { color: #000; }
.bar .sep { width: 1px; height: 18px; background: #ccc; margin: 0 -3px 0 -2px; }
.bar .combo + .sep { margin: 0 -3px 0 -9px; }
.cols { flex: 1; min-height: 0; display: grid; grid-template-columns: 71px 325px minmax(0, 1fr); gap: 4px; }
.col { display: flex; flex-direction: column; min-height: 0; overflow: hidden; border: solid #c3c5cd; border-width: 0 1px 1px 1px; }
.nav2 { border-left: 0; border-bottom: 0; }
.dialog .strip { height: 10px; }
.col h2 { flex: none; height: 22px; padding: 1px 0 0 8px; background: #efefef; border-bottom: 1px solid #c3c5cd; color: #666; font-weight: 500; }
.nav2 .tree { padding: 4px 0 0 5px; }
.mid { display: grid; grid-template-rows: minmax(0, 356fr) minmax(0, 469fr); gap: 4px; min-height: 0; }
.dialog .search { height: 20px; }
.vbar { position: absolute; right: 2px; top: 0; bottom: 0; width: 9px; display: flex; flex-direction: column; align-items: center; gap: 4px; padding: 3px 0; }
.up { border: 4px solid transparent; border-bottom-color: #333; border-top: 0; }
.down { border: 4px solid transparent; border-top-color: #333; border-bottom: 0; }
.vthumb { width: 8px; flex: 0 1 88%; margin-bottom: auto; border-radius: 4px; background: #c8c8c8; }

.right { display: grid; grid-template-rows: minmax(0, 389fr) minmax(0, 440fr); min-height: 0; background: #efefef; }
.methods { border-right: 0; }
.sheet { flex: 1; min-height: 0; overflow: hidden; background: #fff; }
.grid { width: 100%; }
.w20 { width: 20px; } .w22 { width: 22px; } .w44 { width: 44px; } .w46 { width: 46px; } .w102 { width: 102px; } .w110 { width: 110px; } .w111 { width: 111px; } .w201 { width: 201px; }
.grid th { height: 21px; line-height: 18px; padding: 2px 0 0; background: #efefef; border: solid #c3c5cd; border-width: 0 1px 1px 0; font-weight: 400; }
.grid td { height: 22px; line-height: 20px; padding: 0 0 0 2px; border: solid #c3c5cd; border-width: 0 1px 1px 0; white-space: nowrap; overflow: hidden; }
.grid tr > :last-child { border-right: 0; }
.grid code { font: 10px/10px "Liberation Mono", monospace; }
.wrap { width: 38px; height: 18px; margin: 0 auto; overflow: hidden; line-height: 13px; display: grid; align-content: center; }
.grid th.act { background: #abd4fd; font-weight: 700; }
.cyan td { background: #b0e8fa; }
.grid .rn { font-weight: 700; text-align: center; padding: 0; background: #efefef; }
.grid .rn.act { background: #abd4fd; }
.grid .mid-t { text-align: center; padding: 0; }
.grid .end { text-align: right; padding-right: 17px; }
.grid .focus { border: 2px solid #3ba3cf; padding: 0; line-height: 18px; }
.grid .pm { margin: 0 4px 0 0; background: #fff; }
.grid .leaf::before { content: ""; display: inline-block; width: 18px; height: 9px; margin: 0 4px 0 6px; border: solid #bbb; border-width: 0 0 1px 1px; vertical-align: 3px; }
.hbar { display: flex; align-items: center; gap: 4px; height: 14px; flex: none; padding: 0 4px 0 2px; background: #fff; }
.lt { border: 4px solid transparent; border-right-color: #222; border-left: 0; }
.rt { margin-left: auto; border: 4px solid transparent; border-left-color: #222; border-right: 0; }
.hthumb { width: 57%; height: 8px; border-radius: 4px; background: #c8c8c8; }

.query { display: flex; flex-direction: column; min-height: 0; border-left: 1px solid #c3c5cd; background: #efefef; }
.qtabs { display: flex; align-items: flex-end; gap: 3px; height: 34px; flex: none; border-bottom: 1px solid #c3c5cd; }
.qtab { display: flex; align-items: center; gap: 7px; height: 22px; padding: 2px 5px 0 4px; background: #dedede; color: #333; font-weight: 500; border-radius: 2px 2px 0 0; }
.qtab b { font: 12px/12px "DejaVu Sans", sans-serif; width: 12px; margin-bottom: 6px; color: #555; }
.qtab.on { height: 25px; margin: 0 0 -1px -2px; background: #fff; color: #2d7fe2; border: 1px solid #c3c5cd; border-bottom: 0; }
.vline { width: 1px; height: 29px; margin-left: -3px; background: #c3c5cd; }
.qbody { flex: 1; min-height: 0; display: grid; grid-template-columns: 150px minmax(0, 1fr); gap: 5px; }
.qtree { display: flex; flex-direction: column; min-height: 0; background: #fff; border: solid #c3c5cd; border-width: 0 1px 1px 0; }
.qsearch { display: flex; align-items: center; flex: none; height: 26px; margin: 5px 3px 2px; padding: 0 6px 0 3px; border: 1px solid #abadb3; background: #fff; }
.qlist { position: relative; flex: 1; min-height: 0; overflow: hidden; border-top: 1px solid #c3c5cd; }
.qlist li { display: flex; align-items: center; gap: 7px; height: 21px; padding-left: 12px; white-space: nowrap; }
.qlist .l1 { padding-left: 32px; }
.qlist .l2 { padding-left: 52px; }
.qlist .l3 { padding-left: 81px; }
.qlist .l3 span { padding: 0 4px; min-width: 51px; }
.qlist .on { background: #c8d8ef; }
.tc { flex: none; width: 6px; height: 9px; background: linear-gradient(#888, #888); clip-path: polygon(0 0, 100% 50%, 0 100%, 0 0, 1px 2px, 1px 7px, 4px 50%, 1px 2px); }
.qgrid { position: relative; min-height: 0; background: #fff; border: 1px solid #7f8590; overflow: hidden; }
.quota th { height: 21px; background: #fff; }
.quota td { height: 19px; line-height: 18px; }
.quota th.yel { background: #ffebb5; font-weight: 700; border-bottom: 2px solid #3ba3cf; line-height: 17px; }
.quota .rn.yel { background: #ffebb5; border-right: 2px solid #3ba3cf; }
.quota .rn2 { text-align: center; padding: 0; }
.quota .cur { border: solid #7d7d7d; border-width: 0 2px 2px 0; line-height: 17px; }
.bluebar { position: absolute; left: 12px; bottom: 2px; width: 72%; height: 8px; background: #7ea6e3; }
.qfoot { display: flex; align-items: center; gap: 4px; flex: none; height: 28px; padding: 1px 3px 0 6px; border-bottom: 1px solid #c3c5cd; white-space: nowrap; }
.qfoot .combo { width: auto; }
.qfoot .wide { flex: 271 1 0; }
.qfoot .mid-w { flex: 188 1 0; }
.qfoot .more { margin-left: 14px; }
.status { display: flex; justify-content: flex-end; align-items: center; flex: none; height: 11px; padding-right: 2px; }
.marks { position: absolute; left: 0; top: 0; pointer-events: none; }
```
